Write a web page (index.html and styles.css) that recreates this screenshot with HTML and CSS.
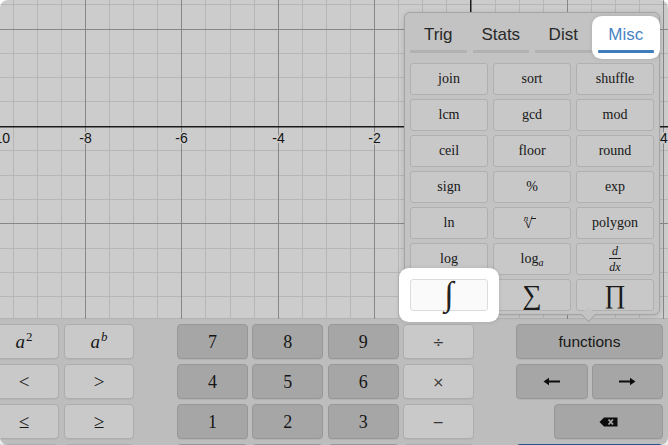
FILE: index.html
```html
<!DOCTYPE html>
<html>
<head>
<meta charset="utf-8">
<link rel="stylesheet" href="styles.css">
</head>
<body>
<div class="app">
  <div class="graph">
    <svg class="grid" width="668" height="319" viewBox="0 0 668 319">
      <g class="minor">
        <line x1="13.5" y1="0" x2="13.5" y2="319"/><line x1="37.5" y1="0" x2="37.5" y2="319"/><line x1="61.5" y1="0" x2="61.5" y2="319"/>
        <line x1="109.5" y1="0" x2="109.5" y2="319"/><line x1="133.5" y1="0" x2="133.5" y2="319"/><line x1="157.5" y1="0" x2="157.5" y2="319"/>
        <line x1="205.5" y1="0" x2="205.5" y2="319"/><line x1="230.5" y1="0" x2="230.5" y2="319"/><line x1="254.5" y1="0" x2="254.5" y2="319"/>
        <line x1="302.5" y1="0" x2="302.5" y2="319"/><line x1="326.5" y1="0" x2="326.5" y2="319"/><line x1="350.5" y1="0" x2="350.5" y2="319"/>
        <line x1="398.5" y1="0" x2="398.5" y2="319"/><line x1="422.5" y1="0" x2="422.5" y2="319"/><line x1="446.5" y1="0" x2="446.5" y2="319"/>
        <line x1="495.5" y1="0" x2="495.5" y2="319"/><line x1="519.5" y1="0" x2="519.5" y2="319"/><line x1="543.5" y1="0" x2="543.5" y2="319"/>
        <line x1="591.5" y1="0" x2="591.5" y2="319"/><line x1="615.5" y1="0" x2="615.5" y2="319"/><line x1="639.5" y1="0" x2="639.5" y2="319"/>
        <line x1="0" y1="4.5" x2="668" y2="4.5"/><line x1="0" y1="53.5" x2="668" y2="53.5"/><line x1="0" y1="77.5" x2="668" y2="77.5"/>
        <line x1="0" y1="101.5" x2="668" y2="101.5"/><line x1="0" y1="150.5" x2="668" y2="150.5"/><line x1="0" y1="175.5" x2="668" y2="175.5"/>
        <line x1="0" y1="199.5" x2="668" y2="199.5"/><line x1="0" y1="248.5" x2="668" y2="248.5"/><line x1="0" y1="272.5" x2="668" y2="272.5"/>
        <line x1="0" y1="296.5" x2="668" y2="296.5"/>
      </g>
      <g class="major">
        <line x1="85.5" y1="0" x2="85.5" y2="319"/><line x1="181.5" y1="0" x2="181.5" y2="319"/><line x1="278.5" y1="0" x2="278.5" y2="319"/>
        <line x1="374.5" y1="0" x2="374.5" y2="319"/><line x1="567.5" y1="0" x2="567.5" y2="319"/><line x1="663.5" y1="0" x2="663.5" y2="319"/>
        <line x1="0" y1="29.5" x2="668" y2="29.5"/><line x1="0" y1="223.5" x2="668" y2="223.5"/>
      </g>
      <g class="axis">
        <line x1="470.75" y1="0" x2="470.75" y2="319"/>
        <line x1="0" y1="126.75" x2="668" y2="126.75"/>
      </g>
      <g class="labels">
        <text x="0" y="143">-10</text>
        <text x="85.5" y="143">-8</text>
        <text x="181.5" y="143">-6</text>
        <text x="278.5" y="143">-4</text>
        <text x="374.5" y="143">-2</text>
        <text x="664" y="143">4</text>
      </g>
    </svg>
  </div>

  <div class="keypad">
    <div class="group group-left">
      <div class="key key-light"><span class="math"><i>a</i><sup>2</sup></span></div>
      <div class="key key-light"><span class="math"><i>a</i><sup><i>b</i></sup></span></div>
      <div class="key key-light"><span class="rel">&lt;</span></div>
      <div class="key key-light"><span class="rel">&gt;</span></div>
      <div class="key key-light"><span class="rel">≤</span></div>
      <div class="key key-light"><span class="rel">≥</span></div>
      <div class="key key-light"><span class="rel">|a|</span></div>
      <div class="key key-light"><span class="rel">,</span></div>
    </div>
    <div class="group group-num">
      <div class="key key-dark"><span class="digit">7</span></div>
      <div class="key key-dark"><span class="digit">8</span></div>
      <div class="key key-dark"><span class="digit">9</span></div>
      <div class="key key-light"><span class="op">÷</span></div>
      <div class="key key-dark"><span class="digit">4</span></div>
      <div class="key key-dark"><span class="digit">5</span></div>
      <div class="key key-dark"><span class="digit">6</span></div>
      <div class="key key-light"><span class="op">×</span></div>
      <div class="key key-dark"><span class="digit">1</span></div>
      <div class="key key-dark"><span class="digit">2</span></div>
      <div class="key key-dark"><span class="digit">3</span></div>
      <div class="key key-light"><span class="op">−</span></div>
      <div class="key key-dark"><span class="digit">0</span></div>
      <div class="key key-dark"><span class="digit">.</span></div>
      <div class="key key-dark"><span class="digit">=</span></div>
      <div class="key key-light"><span class="op">+</span></div>
    </div>
    <div class="group group-right">
      <div class="key key-dark key-wide"><span class="word">functions</span></div>
      <div class="key key-dark">
        <svg width="18" height="9" viewBox="0 0 18 9"><path d="M17 4.5H5" stroke="#111" stroke-width="2"/><path d="M0.5 4.5L6 0.8V8.2Z" fill="#111"/></svg>
      </div>
      <div class="key key-dark">
        <svg width="18" height="9" viewBox="0 0 18 9"><path d="M1 4.5H13" stroke="#111" stroke-width="2"/><path d="M17.5 4.5L12 0.8V8.2Z" fill="#111"/></svg>
      </div>
      <div class="key key-dark key-back">
        <svg width="19" height="10" viewBox="0 0 19 10"><path d="M5 0.5H18.5V9.5H5L0.5 5Z" fill="#111"/><path d="M9.5 2.5L14 7.5M14 2.5L9.5 7.5" stroke="#d0d0d0" stroke-width="1.8"/></svg>
      </div>
      <div class="key key-enter key-wide"></div>
    </div>
  </div>

  <div class="popup">
    <div class="tabs">
      <div class="tab"><span class="tab-label">Trig</span><span class="tab-bar"></span></div>
      <div class="tab"><span class="tab-label">Stats</span><span class="tab-bar"></span></div>
      <div class="tab"><span class="tab-label">Dist</span><span class="tab-bar"></span></div>
      <div class="tab tab-active spot spot-tab"><span class="tab-label">Misc</span><span class="tab-bar"></span></div>
    </div>
    <div class="fn-grid">
      <div class="fkey">join</div>
      <div class="fkey">sort</div>
      <div class="fkey">shuffle</div>
      <div class="fkey">lcm</div>
      <div class="fkey">gcd</div>
      <div class="fkey">mod</div>
      <div class="fkey">ceil</div>
      <div class="fkey">floor</div>
      <div class="fkey">round</div>
      <div class="fkey">sign</div>
      <div class="fkey">%</div>
      <div class="fkey">exp</div>
      <div class="fkey">ln</div>
      <div class="fkey"><span class="nroot"><i class="idx">n</i><span class="rad">√</span><span class="vinc"></span></span></div>
      <div class="fkey">polygon</div>
      <div class="fkey">log</div>
      <div class="fkey"><span>log<sub class="base"><i>a</i></sub></span></div>
      <div class="fkey"><span class="frac"><i class="fnum">d</i><i class="fden">dx</i></span></div>
      <div class="fkey fkey-big spot spot-key"><span class="integral">∫</span></div>
      <div class="fkey fkey-big"><span class="bigop">∑</span></div>
      <div class="fkey fkey-big"><span class="bigop bigop-prod">∏</span></div>
    </div>
  </div>

  <div class="overlay"></div>
</div>
</body>
</html>
```

FILE: styles.css
```css
html, body {
  margin: 0;
  padding: 0;
  width: 668px;
  height: 445px;
  overflow: hidden;
  background: #ffffff;
}

body {
  font-family: "Liberation Sans", Arial, sans-serif;
}

.app {
  position: relative;
  width: 668px;
  height: 445px;
  overflow: hidden;
  background: #ffffff;
}

/* ---------- graph ---------- */
.graph {
  height: 319px;
  background: #ffffff;
}

.grid {
  display: block;
}

.grid .minor line {
  stroke: #e4e4e4;
  stroke-width: 1;
}

.grid .major line {
  stroke: #a9a9a9;
  stroke-width: 1;
}

.grid .axis line {
  stroke: #222222;
  stroke-width: 1.5;
}

.grid .labels text {
  font-family: "Liberation Sans", Arial, sans-serif;
  font-size: 14px;
  fill: #1a1a1a;
  text-anchor: middle;
  stroke: #ffffff;
  stroke-width: 3px;
  paint-order: stroke;
  stroke-linejoin: round;
}

/* ---------- keypad ---------- */
.keypad {
  display: flex;
  align-items: flex-start;
  background: #ededed;
  padding-top: 5px;
  height: 200px;
  box-sizing: border-box;
  border-top: 1px solid #e0e0e0;
  margin-top: -1px;
}

.group {
  display: grid;
  grid-auto-rows: 35px;
  row-gap: 5px;
}

.group-left {
  grid-template-columns: 70px 70px;
  column-gap: 5px;
  margin-left: -11px;
}

.group-num {
  grid-template-columns: repeat(4, 71px);
  column-gap: 4.33px;
  margin-left: 43px;
}

.group-right {
  grid-template-columns: 72px 71px;
  column-gap: 4px;
  margin-left: 42px;
}

.key {
  box-sizing: border-box;
  display: flex;
  align-items: center;
  justify-content: center;
  border-radius: 4px;
  color: #1c1c1c;
  border: 1px solid transparent;
}

.key-light {
  background: #fcfcfc;
  border-color: #d9d9d9;
  box-shadow: 0 1px 0 rgba(0, 0, 0, 0.04);
}

.key-dark {
  background: #d0d0d0;
  border-color: #bdbdbd;
  box-shadow: 0 1px 0 rgba(0, 0, 0, 0.05);
}

.key-enter {
  background: #3a77c2;
  border-color: #3169ad;
}

.key-wide {
  grid-column: 1 / 3;
}

.key-back {
  grid-column: 1 / 3;
  justify-self: end;
  width: 109px;
}

.math {
  font-family: "Liberation Serif", "Times New Roman", serif;
  font-size: 19px;
  line-height: 1;
}

.math sup {
  font-size: 13px;
  vertical-align: 0;
  position: relative;
  top: -7px;
  margin-left: 1px;
}

.rel {
  font-family: "Liberation Serif", "Times New Roman", serif;
  font-size: 19px;
  line-height: 1;
}

.digit {
  font-family: "Liberation Serif", "Times New Roman", serif;
  font-size: 18px;
  line-height: 1;
}

.op {
  font-family: "DejaVu Sans", sans-serif;
  font-size: 14px;
  color: #444444;
  line-height: 1;
}

.word {
  font-family: "Liberation Sans", Arial, sans-serif;
  font-size: 15.5px;
  color: #1c1c1c;
}

/* ---------- function popup ---------- */
.popup {
  position: absolute;
  left: 404px;
  top: 12px;
  width: 244px;
  padding: 9px 5px 3px;
  background: #f4f4f4;
  border: 1px solid #cdcdcd;
  border-radius: 6px;
  box-shadow: 0 1px 5px rgba(0, 0, 0, 0.15);
}

.popup::after {
  content: "";
  position: absolute;
  left: 178px;
  bottom: -6px;
  width: 10px;
  height: 10px;
  background: #f4f4f4;
  border-right: 1px solid #cdcdcd;
  border-bottom: 1px solid #cdcdcd;
  transform: rotate(45deg);
}

.tabs {
  display: flex;
  gap: 6px;
  margin-bottom: 10px;
}

.tab {
  flex: 1;
  box-sizing: border-box;
  height: 31px;
  padding-top: 3px;
  display: flex;
  flex-direction: column;
  align-items: center;
}

.tab-label {
  font-family: "Liberation Sans", Arial, sans-serif;
  font-size: 17px;
  line-height: 20px;
  color: #333333;
}

.tab-bar {
  align-self: stretch;
  margin-top: auto;
  height: 3px;
  background: #dedede;
  border-radius: 1px;
}

.tab-active .tab-label {
  color: #4784c5;
}

.tab-active .tab-bar {
  background: #3f7dbf;
}

.fn-grid {
  display: grid;
  grid-template-columns: repeat(3, 78px);
  grid-auto-rows: 32px;
  column-gap: 5px;
  row-gap: 4px;
}

.fkey {
  box-sizing: border-box;
  display: flex;
  align-items: center;
  justify-content: center;
  background: #fafafa;
  border: 1px solid #dcdcdc;
  border-radius: 3px;
  font-family: "Liberation Serif", "Times New Roman", serif;
  font-size: 14px;
  color: #222222;
}

.base {
  font-size: 10px;
  vertical-align: -3px;
  line-height: 0;
}

.nroot {
  display: inline-flex;
  align-items: flex-start;
  line-height: 1;
  margin-left: -4px;
}

.nroot .idx {
  font-size: 9px;
  margin-right: -4px;
  margin-top: -2px;
}

.nroot .rad {
  font-size: 15px;
}

.nroot .vinc {
  width: 5px;
  height: 0;
  margin-top: 2px;
  margin-left: -1px;
  border-top: 1px solid #222222;
}

.frac {
  display: inline-flex;
  flex-direction: column;
  align-items: center;
  line-height: 1;
  font-size: 12px;
}

.fnum {
  padding: 0 3px 1px;
  border-bottom: 1px solid #222222;
}

.fden {
  padding: 2px 2px 0;
}

.integral {
  font-family: "Liberation Serif", "Times New Roman", serif;
  font-size: 34px;
  line-height: 1;
  margin-top: -2px;
}

.bigop {
  font-size: 27px;
  line-height: 1;
}

.bigop-prod {
  font-size: 26px;
}

/* ---------- tutorial overlay ---------- */
.overlay {
  position: absolute;
  inset: 0;
  z-index: 10;
  background: rgba(0, 0, 0, 0.2);
  border-radius: 8px;
  pointer-events: none;
}

.spot {
  position: relative;
  z-index: 11;
}

.spot-tab {
  background: #ffffff;
  border-radius: 4px;
  box-shadow: 0 0 0 6px #ffffff, 0 0 4px 6px rgba(0, 0, 0, 0.12);
}

.spot-key {
  box-shadow: 0 0 0 11px #ffffff, 0 0 4px 11px rgba(0, 0, 0, 0.12);
}
```
